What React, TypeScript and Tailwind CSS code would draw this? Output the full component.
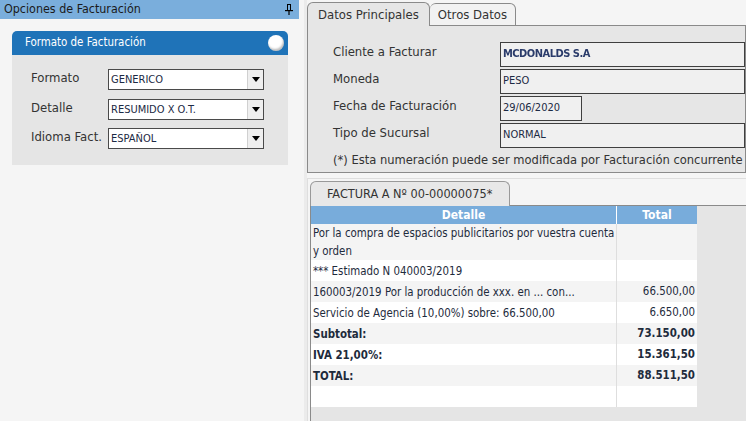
import React from "react";

const font = { fontFamily: '"DejaVu Sans Condensed", "DejaVu Sans", sans-serif' };

const selects = [
  { label: "Formato", value: "GENERICO" },
  { label: "Detalle", value: "RESUMIDO X O.T." },
  { label: "Idioma Fact.", value: "ESPAÑOL" },
];

const fields = [
  { label: "Cliente a Facturar", value: "MCDONALDS S.A", w: "flex-1", blur: true },
  { label: "Moneda", value: "PESO", w: "flex-1" },
  { label: "Fecha de Facturación", value: "29/06/2020", w: "w-[82px]" },
  { label: "Tipo de Sucursal", value: "NORMAL", w: "flex-1" },
];

const rows = [
  { d: "Por la compra de espacios publicitarios por vuestra cuenta y orden", t: "", tall: true },
  { d: "*** Estimado N 040003/2019", t: "" },
  { d: "160003/2019 Por la producción de xxx. en ... con...", t: "66.500,00" },
  { d: "Servicio de Agencia (10,00%) sobre: 66.500,00", t: "6.650,00" },
  { d: "Subtotal:", t: "73.150,00", bold: true },
  { d: "IVA 21,00%:", t: "15.361,50", bold: true },
  { d: "TOTAL:", t: "88.511,50", bold: true },
  { d: "", t: "" },
];

function PinIcon() {
  return (
    <svg width="8" height="11" viewBox="0 0 8 11" className="shrink-0">
      <rect x="2.5" y="0.5" width="3" height="6" fill="none" stroke="#000" strokeWidth="1" />
      <rect x="0" y="6" width="8" height="1.2" fill="#000" />
      <rect x="3.4" y="7" width="1.2" height="4" fill="#000" />
    </svg>
  );
}

function Arrow() {
  return (
    <svg width="8" height="5" viewBox="0 0 8 5">
      <path d="M0 0 H8 L4 5 Z" fill="#000" />
    </svg>
  );
}

export default function App() {
  return (
    <div className="flex h-[421px] w-[746px] overflow-hidden bg-[#f5f5f5] text-[#333]" style={font}>
      {/* Left: opciones */}
      <aside className="flex w-[307px] shrink-0 flex-col border-r-[3px] border-[#ebebeb]">
        <div className="mr-[5px] flex h-[19px] items-center justify-between bg-[#7aaedc] pl-[4px] pr-[6px]">
          <span className="text-[12.4px] text-[#1a1a1a]">Opciones de Facturación</span>
          <PinIcon />
        </div>

        <div className="ml-[12px] mr-[16px] mt-[12px]">
          <div className="flex h-[24px] items-center justify-between rounded-t-[5px] bg-[#1f73b8] pl-[13px] pr-[4px]">
            <span className="text-[11.4px] text-white">Formato de Facturación</span>
            <span className="h-[16px] w-[16px] rounded-full bg-white shadow-[inset_-1px_-2px_2px_rgba(0,0,0,0.25)]" />
          </div>
          <div className="flex flex-col gap-[6px] bg-[#e5e5e5] pb-[14px] pl-[19px] pt-[13px]">
            {selects.map((s) => (
              <div key={s.label} className="flex items-center">
                <span className="w-[77px] pb-[4px] text-[13px] text-[#333]">{s.label}</span>
                <div className="flex h-[21px] w-[156px] items-stretch border border-[#4a4a4a] bg-white">
                  <span className="flex flex-1 items-center pl-[2px] pt-[1px] text-[11px] text-[#1c2a44]">{s.value}</span>
                  <span className="flex w-[16px] items-center justify-center border-l border-[#d0d0d0] bg-[#efefef]">
                    <Arrow />
                  </span>
                </div>
              </div>
            ))}
          </div>
        </div>
      </aside>

      {/* Right */}
      <main className="flex min-w-0 flex-1 flex-col">
        {/* Datos principales */}
        <section className="flex flex-col">
          <div className="flex h-[26px] items-end pt-[2px]">
            <div className="flex h-[24px] items-center rounded-t-[6px] border border-b-0 border-[#8a8a8a] bg-[#e6e6e6] px-[10px] text-[13px]">
              Datos Principales
            </div>
            <div className="flex h-[23px] items-center rounded-t-[6px] border border-l-0 border-[#8a8a8a] bg-[#f2f2f2] px-[8px] text-[13px]">
              Otros Datos
            </div>
            <div className="flex-1 border-b border-[#8a8a8a]" />
          </div>
          <div className="flex h-[147px] flex-col border-x border-b border-[#8a8a8a] bg-[#e6e6e6] pl-[25px] pt-[16px]">
            <div className="flex flex-col gap-[2px]">
              {fields.map((f) => (
                <div key={f.label} className="flex items-center">
                  <span className="w-[167px] shrink-0 pb-[5px] text-[13px]">{f.label}</span>
                  <div className={`${f.w} flex h-[25px] items-center border border-[#3f3f3f] bg-[#f0f0f0] pl-[2px] text-[11px] text-[#1c2a44]`}>
                    <span className={f.blur ? "blur-[0.6px] font-bold tracking-[-0.5px] text-[#2a3b6a]" : ""}>{f.value}</span>
                  </div>
                </div>
              ))}
            </div>
            <p className="mt-[2px] whitespace-nowrap text-[12.8px]">
              (*) Esta numeración puede ser modificada por Facturación concurrente
            </p>
          </div>
        </section>

        {/* Factura */}
        <section className="mt-[5px] flex flex-1 flex-col border-l border-t border-[#dedede] pl-[2px] pt-[2px]">
          <div className="flex h-[25px] items-end">
            <div className="flex h-[25px] w-[200px] items-center rounded-t-[6px] border border-b-0 border-[#999] bg-[#e8e8e8] pl-[16px] text-[12.6px]">
              FACTURA A Nº 00-00000075*
            </div>
            <div className="flex-1 border-b border-[#8a8a8a]" />
          </div>
          <div className="flex flex-1 border-l border-[#8a8a8a] bg-[#e5e5e5]">
            <div className="flex w-[386px] flex-col self-start text-[11.4px] text-[#1e2b3c]">
              <div className="flex h-[18px] bg-[#78acdb] text-[12px] font-semibold text-white">
                <div className="flex w-[305px] items-center justify-center">Detalle</div>
                <div className="flex flex-1 items-center justify-center border-l border-white">Total</div>
              </div>
              {rows.map((r, i) => (
                <div
                  key={i}
                  className={`flex ${r.tall ? "h-[36px]" : "h-[21px]"} ${i % 2 === 0 ? "bg-[#f4f4f4]" : "bg-white"} ${r.bold ? "font-bold" : ""}`}
                >
                  <div className="flex w-[305px] items-center pl-[2px] leading-[18px]">{r.d}</div>
                  <div className="flex flex-1 items-center justify-end border-l border-[#dedede] pr-[2px]">{r.t}</div>
                </div>
              ))}
            </div>
          </div>
        </section>
      </main>
    </div>
  );
}
